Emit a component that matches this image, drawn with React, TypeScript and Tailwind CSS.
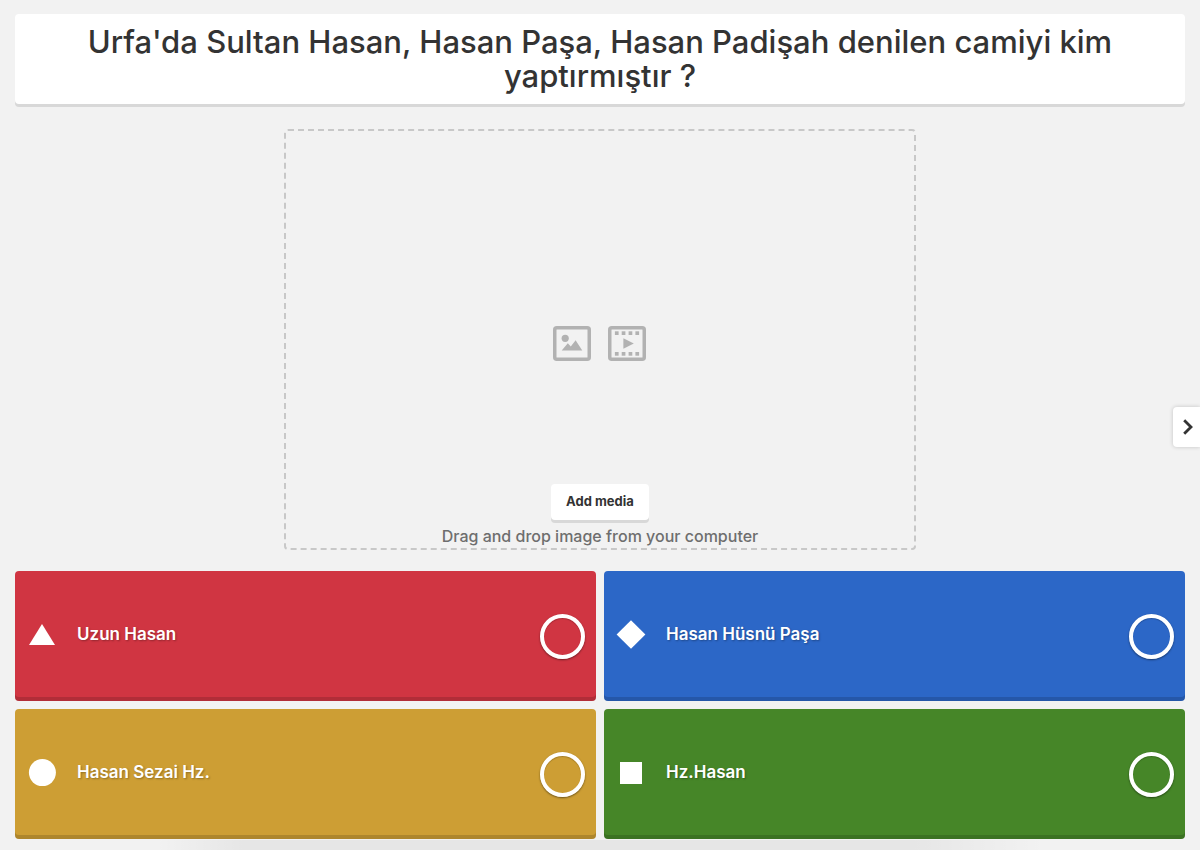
import { useState } from "react"
import type { ReactNode } from "react"

type Answer = {
  id: string
  text: string
  color: string
  shape: ReactNode
}

const answers: Answer[] = [
  {
    id: "triangle",
    text: "Uzun Hasan",
    color: "bg-[#d03542]",
    shape: <polygon points="16,5 29,26 3,26" />,
  },
  {
    id: "diamond",
    text: "Hasan Hüsnü Paşa",
    color: "bg-[#2c67c7]",
    shape: <polygon points="16,1.3 30.4,15.5 16,29.7 1.6,15.5" />,
  },
  {
    id: "circle",
    text: "Hasan Sezai Hz.",
    color: "bg-[#cd9e34]",
    shape: <circle cx="16.4" cy="15.6" r="13.5" />,
  },
  {
    id: "square",
    text: "Hz.Hasan",
    color: "bg-[#468628]",
    shape: <rect x="5" y="5" width="22" height="22" />,
  },
]

function ImageIcon() {
  return (
    <svg viewBox="0 0 38 35" className="h-[35px] w-[38px]" fill="#b2b2b2" aria-hidden="true">
      <rect x="1.75" y="1.75" width="34.5" height="31.5" rx="2" fill="none" stroke="#b2b2b2" strokeWidth="3.5" />
      <circle cx="12.2" cy="12.3" r="3.6" />
      <path d="M8.7 24.5 L14.8 17.3 L17.8 20.6 L22.6 14.2 L29.3 24.5 Z" />
    </svg>
  )
}

function VideoIcon() {
  const holes = [6.9, 13.7, 20.6, 27.4]
  return (
    <svg viewBox="0 0 38 35" className="h-[35px] w-[38px]" fill="#b2b2b2" aria-hidden="true">
      <rect x="1.75" y="1.75" width="34.5" height="31.5" rx="2" fill="none" stroke="#b2b2b2" strokeWidth="3.5" />
      {holes.map((x) => (
        <g key={x}>
          <rect x={x} y="5.3" width="3.7" height="3.7" />
          <rect x={x} y="26" width="3.7" height="3.7" />
        </g>
      ))}
      <path d="M15.4 12.3 L25.8 17.5 L15.4 22.7 Z" />
    </svg>
  )
}

export default function App() {
  const [correct, setCorrect] = useState<string[]>([])

  const toggle = (id: string) => {
    setCorrect((prev) =>
      prev.includes(id) ? prev.filter((c) => c !== id) : [...prev, id]
    )
  }

  return (
    <div className="relative flex min-h-screen flex-col overflow-hidden bg-[#f2f2f2] px-[15px] pt-[14px] pb-[11px] font-[Inter,sans-serif] text-[#333333]">
      <h1 className="rounded bg-white px-12 py-[11px] text-center text-[31px] leading-[34px] font-medium shadow-[0_3px_0_#d8d8d8]">
        Urfa'da Sultan Hasan, Hasan Paşa, Hasan Padişah denilen camiyi kim
        yaptırmıştır ?
      </h1>

      {/* MEDIA */}
      <div className="mx-auto mt-[25px] mb-[21px] flex w-[54%] flex-1 flex-col items-center rounded border-2 border-dashed border-[#c8c8c8]">
        <div className="flex flex-1 items-center gap-[17px] pt-[72px]">
          <ImageIcon />
          <VideoIcon />
        </div>
        <button
          type="button"
          className="mb-1 h-9 rounded bg-white px-[15px] text-[13px] font-bold shadow-[0_3px_0_#d8d8d8]"
        >
          Add media
        </button>
        <p className="text-base leading-6 font-medium text-[#6e6e6e]">
          Drag and drop image from your computer
        </p>
      </div>

      {/* ANSWERS */}
      <div className="grid grid-cols-2 gap-2">
        {answers.map((a) => (
          <label
            key={a.id}
            className={`flex h-[130px] items-center rounded px-[11px] shadow-[inset_0_-4px_0_rgba(0,0,0,0.15)] ${a.color}`}
          >
            <span className="flex flex-1 items-center gap-[19px] pb-[2px] text-[17px] font-semibold text-white text-shadow-[1px_1px_2px_rgba(0,0,0,0.3)]">
              <svg viewBox="0 0 32 32" className="size-8" fill="white" aria-hidden="true">
                {a.shape}
              </svg>
              {a.text}
            </span>
            <input
              type="checkbox"
              checked={correct.includes(a.id)}
              onChange={() => toggle(a.id)}
              className="size-[45px] appearance-none rounded-full border-4 border-white shadow-[0_1px_2px_rgba(0,0,0,0.5),inset_0_1px_1px_rgba(0,0,0,0.2)] checked:bg-[#66bf39]"
            />
          </label>
        ))}
      </div>

      {/* soft shade along the bottom edge */}
      <div className="pointer-events-none absolute inset-x-[13%] bottom-0 h-[10px] bg-[linear-gradient(to_right,transparent,rgba(0,0,0,0.05)_10%,rgba(0,0,0,0.05)_85%,transparent)]" />

      <button
        type="button"
        aria-label="Open settings"
        className="absolute top-1/2 right-0 flex h-10 w-[27px] -translate-y-[18px] items-center justify-center rounded-l bg-white pl-[2px] shadow-[0_0_4px_rgba(0,0,0,0.2)]"
      >
        <svg viewBox="0 0 10 16" className="h-4 w-[10px]" fill="none" stroke="#333333" strokeWidth="2.8" aria-hidden="true">
          <path d="M1.2 1.2 L8 8 L1.2 14.8" />
        </svg>
      </button>
    </div>
  )
}
